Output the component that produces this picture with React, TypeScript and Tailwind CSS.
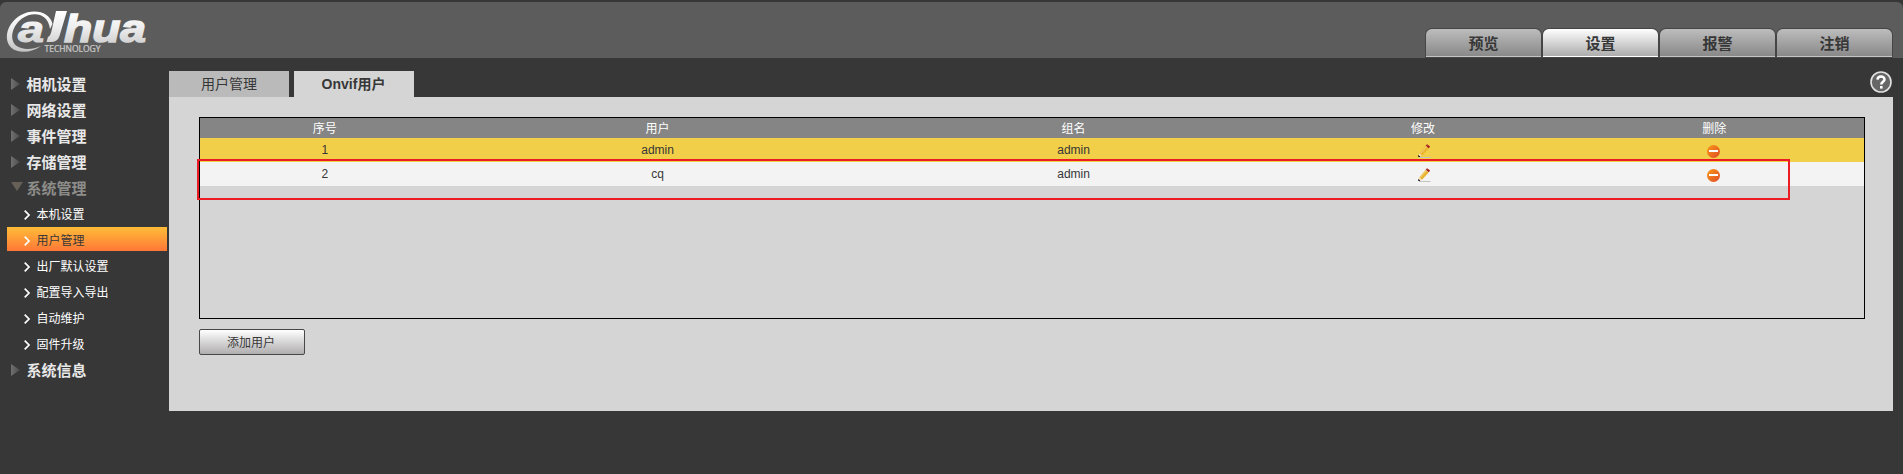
import { ReactNode } from 'react';
import clsx from 'clsx';

interface IUserRow {
  id: number;
  name: string;
  group: string;
}

const NAV_TABS = ['预览', '设置', '报警', '注销'];

const MENU_TOP = ['相机设置', '网络设置', '事件管理', '存储管理'];

const MENU_SYSTEM = [
  '本机设置',
  '用户管理',
  '出厂默认设置',
  '配置导入导出',
  '自动维护',
  '固件升级',
];

const USERS: IUserRow[] = [
  { id: 1, name: 'admin', group: 'admin' },
  { id: 2, name: 'cq', group: 'admin' },
];

const COLUMNS = 'grid grid-cols-[15fr_25fr_25fr_17fr_18fr] text-center';

function Logo() {
  return (
    <svg
      width="146"
      height="46"
      viewBox="0 0 146 46"
      className="ml-[5px] mt-[7px] overflow-visible"
    >
      <defs>
        <linearGradient
          id="silver"
          gradientUnits="userSpaceOnUse"
          x1="0"
          y1="2"
          x2="0"
          y2="43"
        >
          <stop offset="0" stopColor="#ffffff" />
          <stop offset="0.4" stopColor="#eeeeee" />
          <stop offset="1" stopColor="#c2c2c2" />
        </linearGradient>
      </defs>
      <g fill="url(#silver)">
        <path d="M47.5 15C45 3 29-1 16 6C2 14-2 30 6 38.500C13 45 27 44 36 37C27 41 17 41 11 36.500C4 30 7 17 17 9.500C28 2 43 4 45 20Z" />
        <path d="M51 2H62L54.500 27Q52.500 33 46 33H41.500L43 28Q45.500 27 46.500 22Z" />
        <text
          x="13"
          y="32.500"
          fontSize="37"
          fontWeight="700"
          fontStyle="italic"
          fontFamily="Liberation Sans, Arial, sans-serif"
          textLength="26"
          lengthAdjust="spacingAndGlyphs"
          stroke="url(#silver)"
          strokeWidth="1"
        >
          a
        </text>
        <text
          x="59"
          y="32.500"
          fontSize="39"
          fontWeight="700"
          fontStyle="italic"
          fontFamily="Liberation Sans, Arial, sans-serif"
          textLength="82"
          lengthAdjust="spacingAndGlyphs"
          stroke="url(#silver)"
          strokeWidth="1.5"
        >
          hua
        </text>
        <text
          x="39.500"
          y="43"
          fontSize="8.400"
          fontFamily="Open Sans, sans-serif"
          textLength="56"
          lengthAdjust="spacingAndGlyphs"
          stroke="#d0d0d0"
          strokeWidth="0.2"
        >
          TECHNOLOGY
        </text>
      </g>
    </svg>
  );
}

function PencilIcon() {
  return (
    <svg width="13" height="14" viewBox="0 0 13 14">
      <path d="M1 13.5H12.5" stroke="#c3c3c3" />
      <path d="M1.3 9.6L7.6 2L10.7 4.6L4.2 11.6L1.6 12.3Z" fill="#eab32c" />
      <path d="M2.4 9.6L8.4 2.6" stroke="#f6d588" />
      <path d="M1.4 9.2L3.9 11.6L2 12.2L.6 11.4Z" fill="#fbe0c0" />
      <path d="M7.6 1.6L9.2 .2L12 2.6L10.8 4.2Z" fill="#a01616" />
      <path d="M8.2 2.6L9.4 1.4" stroke="#e8c8b8" strokeWidth="0.6" />
      <path d="M.3 10.8V12.9H2.4Z" fill="#000" />
    </svg>
  );
}

function RemoveIcon() {
  return (
    <svg width="13" height="13" viewBox="0 0 13 13">
      <defs>
        <linearGradient id="remove" x1="0" y1="0" x2="1" y2="1">
          <stop offset="0" stopColor="#f99a16" />
          <stop offset="1" stopColor="#e0492a" />
        </linearGradient>
      </defs>
      <circle cx="6.5" cy="6.5" r="6.5" fill="url(#remove)" />
      <path d="M2 6H11" stroke="#fff" strokeWidth="2" />
    </svg>
  );
}

function HelpIcon() {
  return (
    <svg width="22" height="22" viewBox="0 0 22 22">
      <circle cx="11" cy="11" r="10" fill="#666" stroke="#e2e2e2" strokeWidth="1.6" />
      <path
        d="M7.5 8.6C7.6 4.4 14.5 4.4 14.5 8.4C14.5 10.8 11.3 10.6 11.3 13.4"
        fill="none"
        stroke="#fff"
        strokeWidth="2.5"
      />
      <path d="M10 15H12.6V17.6H10Z" fill="#fff" />
    </svg>
  );
}

function MenuItem({ open, children }: { open?: boolean; children: ReactNode }) {
  return (
    <div
      className={clsx(
        'flex h-[26px] items-center pt-0.5 text-[15px] font-bold',
        open ? 'text-[#8d8d8a]' : 'text-[#e8e8e8]',
      )}
    >
      <svg width="15.5" height="14" viewBox="0 0 15.5 14" className="ml-[11px]">
        <defs>
          <linearGradient id="arrow" x1="0" y1="0" x2="1" y2="0">
            <stop offset="0" stopColor="#707070" />
            <stop offset="1" stopColor="#4c4c4c" />
          </linearGradient>
        </defs>
        {open ? (
          <path d="M0 0H12L6 9Z" fill="#666058" />
        ) : (
          <path d="M0 0V12L9 6Z" fill="url(#arrow)" />
        )}
      </svg>
      {children}
    </div>
  );
}

function SubMenuItem({ active, children }: { active?: boolean; children: ReactNode }) {
  return (
    <div
      className={clsx(
        'mb-0.5 ml-[7px] flex h-6 w-40 items-center pt-[3px] text-xs',
        active
          ? 'bg-linear-to-b from-[#ffbc38] to-[#fd7636] text-[#373737]'
          : 'text-white',
      )}
    >
      <svg width="12.5" height="10" viewBox="0 0 12.5 10" className="ml-[17px]">
        <path d="M.7 .7L5 5L.7 9.3" fill="none" stroke="#fff" strokeWidth="1.7" />
      </svg>
      {children}
    </div>
  );
}

function UserTable() {
  return (
    <div className="relative h-[202px] w-[1666px] border border-black text-xs">
      <div className={clsx(COLUMNS, 'h-5 bg-[#858585] pt-px leading-5 text-white')}>
        <span>序号</span>
        <span>用户</span>
        <span>组名</span>
        <span>修改</span>
        <span>删除</span>
      </div>
      {USERS.map((user, index) => (
        <div
          key={user.id}
          className={clsx(
            COLUMNS,
            'h-6 leading-6 text-[#373737]',
            index === 0 ? 'bg-[#f1cf48]' : 'bg-[#f3f3f3]',
          )}
        >
          <span>{user.id}</span>
          <span>{user.name}</span>
          <span>{user.group}</span>
          <span className="flex justify-center pl-0.5 pt-1.5">
            <PencilIcon />
          </span>
          <span className="flex justify-center pr-0.5 pt-[7px]">
            <RemoveIcon />
          </span>
        </div>
      ))}
      <div className="absolute -left-[3px] top-[41px] h-[41px] w-[1593px] border-2 border-[#ed1c24]" />
    </div>
  );
}

export default function App() {
  return (
    <div className="h-[474px] w-[1903px] overflow-hidden bg-[#373737] pt-0.5 font-['Liberation_Sans','Noto_Sans_CJK_SC',sans-serif]">
      <header className="flex h-14 justify-between rounded-t-md bg-[#5c5c5c]">
        <Logo />
        <nav className="mr-[11px] mt-[27px] flex gap-0.5">
          {NAV_TABS.map((tab) => (
            <div
              key={tab}
              className={clsx(
                'h-7 w-[115px] rounded-t-md border-b pt-px text-center text-[15px] font-bold leading-7 text-[#373737] shadow-[0_0_0_1px_#454545]',
                tab === '设置'
                  ? 'border-white bg-linear-to-b from-white to-[#adadad]'
                  : 'border-[#c4c4c4] bg-linear-to-b from-[#bdbdbd] to-[#898989]',
              )}
            >
              {tab}
            </div>
          ))}
        </nav>
      </header>
      <div className="flex pt-[13px]">
        <aside className="w-[169px]">
          {MENU_TOP.map((item) => (
            <MenuItem key={item}>{item}</MenuItem>
          ))}
          <MenuItem open>系统管理</MenuItem>
          {MENU_SYSTEM.map((item) => (
            <SubMenuItem key={item} active={item === '用户管理'}>
              {item}
            </SubMenuItem>
          ))}
          <MenuItem>系统信息</MenuItem>
        </aside>
        <main className="w-[1724px]">
          <div className="flex h-[26px] gap-[5px] text-sm leading-[26px] text-[#373737]">
            <div className="w-[120px] bg-[#bababa] text-center">用户管理</div>
            <div className="w-[120px] bg-[#d5d5d5] pr-px text-center font-bold">
              Onvif用户
            </div>
            <div className="ml-auto mr-px">
              <HelpIcon />
            </div>
          </div>
          <div className="h-[314px] bg-[#d5d5d5] pl-[30px] pt-5">
            <UserTable />
            <button
              type="button"
              className="mt-2.5 block h-[26px] w-[106px] rounded-xs border border-[#474747] bg-linear-to-b from-white to-[#b0aeaf] pr-0.5 pt-px text-xs text-[#373737]"
            >
              添加用户
            </button>
          </div>
        </main>
      </div>
    </div>
  );
}
